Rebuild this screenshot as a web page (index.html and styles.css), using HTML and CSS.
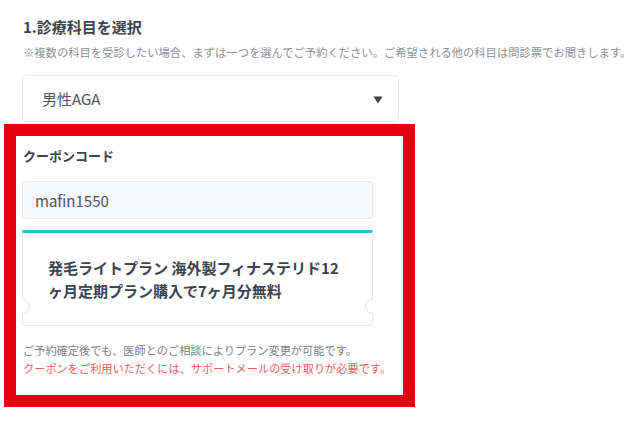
FILE: index.html
```html
<!DOCTYPE html>
<html lang="ja">
<head>
<meta charset="utf-8">
<title>診療科目を選択</title>
<link rel="stylesheet" href="styles.css">
</head>
<body>
<div class="page">
  <h1 class="title">1.診療科目を選択</h1>
  <p class="note">※複数の科目を受診したい場合、まずは一つを選んでご予約ください。ご希望される他の科目は問診票でお聞きします。</p>
  <div class="select">
    <span class="select-value">男性AGA</span>
    <svg class="select-arrow" width="10" height="8" viewBox="0 0 10 8"><path d="M0.5 0.5 H9.5 L5 7.5 Z" fill="#3b4350"/></svg>
  </div>
  <div class="frame">
    <div class="label">クーポンコード</div>
    <div class="input">mafin1550</div>
    <div class="coupon">
      <span class="notch notch-left"></span>
      <span class="notch notch-right"></span>
      <p class="coupon-text">発毛ライトプラン 海外製フィナステリド12<br>ヶ月定期プラン購入で7ヶ月分無料</p>
    </div>
    <p class="info">ご予約確定後でも、医師とのご相談によりプラン変更が可能です。</p>
    <p class="warn">クーポンをご利用いただくには、サポートメールの受け取りが必要です。</p>
  </div>
</div>
</body>
</html>
```
FILE: styles.css
```css
* { box-sizing: border-box; }
html, body { margin: 0; padding: 0; background: #ffffff; }
body {
  font-family: "Noto Sans CJK JP", "Noto Sans", sans-serif;
  color: #3b4350;
}
.page {
  padding: 16px 0 0 22px;
}
.title {
  margin: 0 0 0 1px;
  font-size: 15px;
  line-height: 22px;
  font-weight: 700;
  color: #3b4350;
}
.note {
  margin: 5px 0 0 1px;
  font-size: 11.3px;
  line-height: 18px;
  color: #8a8f97;
  white-space: nowrap;
}
.select {
  margin-top: 14px;
  width: 377px;
  height: 47px;
  border: 1px solid #e8eaee;
  border-radius: 4px;
  display: flex;
  align-items: center;
  justify-content: space-between;
  padding: 0 15px 0 19px;
}
.select-value {
  font-size: 15px;
  color: #4a5260;
}
.select-arrow {
  display: block;
  margin-top: 2px;
}
.frame {
  margin: 2px 0 0 -18px;
  width: 411px;
  border: 12px solid #e60010;
  padding: 11px 0 18px 6px;
}
.label {
  margin-left: 1px;
  font-size: 13px;
  line-height: 18px;
  font-weight: 700;
  color: #3b4350;
}
.input {
  margin-top: 16px;
  width: 351px;
  height: 38px;
  border: 1px solid #e6e8ec;
  border-radius: 4px;
  background: #f7f8fa;
  display: flex;
  align-items: center;
  padding-left: 12px;
  font-size: 15px;
  color: #4a5260;
}
.coupon {
  position: relative;
  margin-top: 11px;
  width: 351px;
  border: 1px solid #e6e8ec;
  border-top: 3px solid #22c3d2;
  border-radius: 0 0 4px 4px;
  padding: 24px 25px 23px;
}
.coupon-text {
  margin: 0;
  font-size: 15px;
  line-height: 22.5px;
  font-weight: 700;
  color: #3b4350;
}
.notch {
  position: absolute;
  top: 66px;
  width: 8px;
  height: 15px;
  background: #ffffff;
  border: 1px solid #e6e8ec;
}
.notch-left {
  left: -1px;
  border-left: none;
  border-radius: 0 8px 8px 0;
}
.notch-right {
  right: -1px;
  border-right: none;
  border-radius: 8px 0 0 8px;
}
.info {
  margin: 15px 0 0 1px;
  font-size: 11.2px;
  line-height: 18px;
  color: #7b8089;
}
.warn {
  margin: 0 0 0 1px;
  font-size: 11.2px;
  line-height: 18px;
  color: #f05c5c;
}
```
